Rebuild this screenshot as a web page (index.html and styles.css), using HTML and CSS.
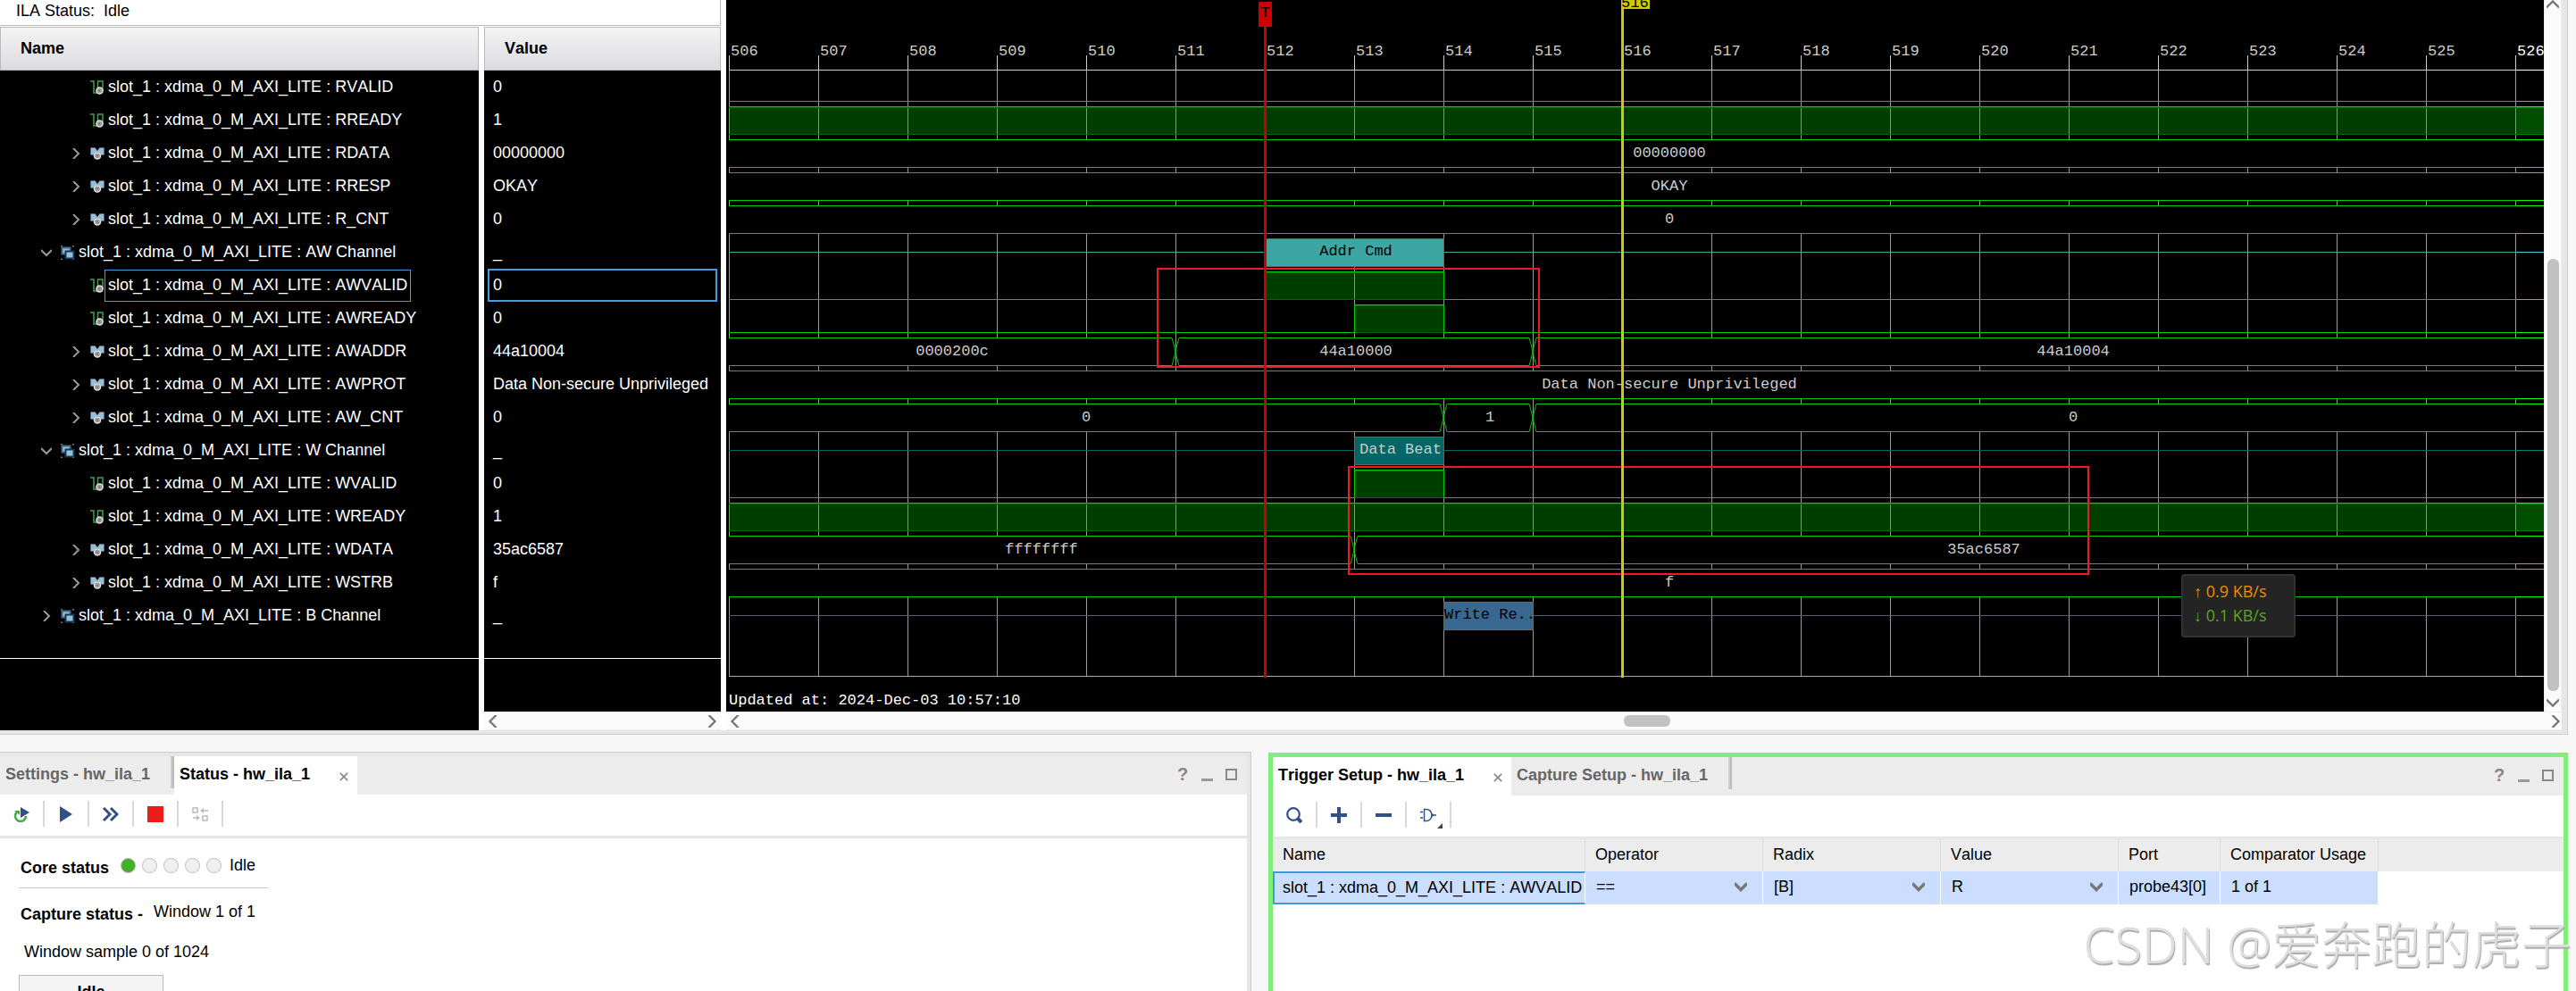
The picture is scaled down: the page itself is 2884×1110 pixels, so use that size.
FILE: index.html
```html
<!DOCTYPE html>
<html lang="en">
<head>
<meta charset="utf-8">
<title>hw_ila_1</title>
<link rel="stylesheet" href="styles.css">
</head>
<body>
<svg class="defs" aria-hidden="true">
  <symbol id="bit" viewBox="0 0 16 16"><path d="M0 1h4v13h4.500V1H14v11" fill="none" stroke="#3aa648" stroke-width="1.5"/><circle cx="10.500" cy="11.500" r="4.300" fill="#ddd"/><circle cx="10.500" cy="11.500" r="1.800" fill="#666" stroke="#999"/></symbol>
  <symbol id="bus" viewBox="0 0 16 16"><path d="M.5 1.500h5L8 5l2.500-3.500h5v8H12L8 6 4 9.500H.5z" fill="#93bfd8" stroke="#667" stroke-width=".6"/><circle cx="8" cy="10.500" r="4.300" fill="#ddd"/><circle cx="8" cy="10.500" r="1.800" fill="#666" stroke="#999"/></symbol>
  <symbol id="group" viewBox="0 0 16 16"><path d="M0 .5h2M13 .5h2M0 15.500h2M13 15.500h2" stroke="#777"/><path d="M1.500 2.500h9v7h-9z" fill="#93c2dc" stroke="#456d8c"/><path d="M5.500 6.500h9v8h-9z" fill="#93c2dc" stroke="#1c3550"/></symbol>
  <symbol id="right" viewBox="0 0 12 12"><path d="M3 0l6 6-6 6" fill="none" stroke="currentColor"/></symbol>
  <symbol id="left" viewBox="0 0 12 12"><path d="M9 0L3 6l6 6" fill="none" stroke="currentColor"/></symbol>
  <symbol id="down" viewBox="0 0 12 12"><path d="M0 3l6 6 6-6" fill="none" stroke="currentColor"/></symbol>
  <symbol id="up" viewBox="0 0 12 12"><path d="M0 9l6-6 6 6" fill="none" stroke="currentColor"/></symbol>
  <symbol id="cross" viewBox="0 0 12 12"><path d="M1 1l10 10M11 1L1 11" stroke="currentColor"/></symbol>
  <symbol id="swap" viewBox="0 0 8 32"><path d="M0 .5C2 6 6 26 8 31.500M8 .5C6 6 2 26 0 31.500" fill="none" stroke="#00cc00"/></symbol>
</svg>

<main class="viewer">
  <section class="signals">
    <div class="ila-status">ILA Status:&nbsp; Idle</div>
    <div class="columns">
      <div class="names">
        <h2 class="col-head">Name</h2>
        <ul class="list">
          <li class="leaf"><svg><use href="#bit"/></svg><span>slot_1 : xdma_0_M_AXI_LITE : RVALID</span></li>
          <li class="leaf"><svg><use href="#bit"/></svg><span>slot_1 : xdma_0_M_AXI_LITE : RREADY</span></li>
          <li class="leaf"><svg class="tw"><use href="#right"/></svg><svg><use href="#bus"/></svg><span>slot_1 : xdma_0_M_AXI_LITE : RDATA</span></li>
          <li class="leaf"><svg class="tw"><use href="#right"/></svg><svg><use href="#bus"/></svg><span>slot_1 : xdma_0_M_AXI_LITE : RRESP</span></li>
          <li class="leaf"><svg class="tw"><use href="#right"/></svg><svg><use href="#bus"/></svg><span>slot_1 : xdma_0_M_AXI_LITE : R_CNT</span></li>
          <li class="group"><svg class="tw"><use href="#down"/></svg><svg><use href="#group"/></svg><span>slot_1 : xdma_0_M_AXI_LITE : AW Channel</span></li>
          <li class="leaf"><svg><use href="#bit"/></svg><span class="picked">slot_1 : xdma_0_M_AXI_LITE : AWVALID</span></li>
          <li class="leaf"><svg><use href="#bit"/></svg><span>slot_1 : xdma_0_M_AXI_LITE : AWREADY</span></li>
          <li class="leaf"><svg class="tw"><use href="#right"/></svg><svg><use href="#bus"/></svg><span>slot_1 : xdma_0_M_AXI_LITE : AWADDR</span></li>
          <li class="leaf"><svg class="tw"><use href="#right"/></svg><svg><use href="#bus"/></svg><span>slot_1 : xdma_0_M_AXI_LITE : AWPROT</span></li>
          <li class="leaf"><svg class="tw"><use href="#right"/></svg><svg><use href="#bus"/></svg><span>slot_1 : xdma_0_M_AXI_LITE : AW_CNT</span></li>
          <li class="group"><svg class="tw"><use href="#down"/></svg><svg><use href="#group"/></svg><span>slot_1 : xdma_0_M_AXI_LITE : W Channel</span></li>
          <li class="leaf"><svg><use href="#bit"/></svg><span>slot_1 : xdma_0_M_AXI_LITE : WVALID</span></li>
          <li class="leaf"><svg><use href="#bit"/></svg><span>slot_1 : xdma_0_M_AXI_LITE : WREADY</span></li>
          <li class="leaf"><svg class="tw"><use href="#right"/></svg><svg><use href="#bus"/></svg><span>slot_1 : xdma_0_M_AXI_LITE : WDATA</span></li>
          <li class="leaf"><svg class="tw"><use href="#right"/></svg><svg><use href="#bus"/></svg><span>slot_1 : xdma_0_M_AXI_LITE : WSTRB</span></li>
          <li class="group"><svg class="tw"><use href="#right"/></svg><svg><use href="#group"/></svg><span>slot_1 : xdma_0_M_AXI_LITE : B Channel</span></li>
        </ul>
      </div>
      <div class="values">
        <h2 class="col-head">Value</h2>
        <ul class="list">
          <li>0</li><li>1</li><li>00000000</li><li>OKAY</li><li>0</li><li>_</li>
          <li class="picked">0</li><li>0</li><li>44a10004</li><li>Data Non-secure Unprivileged</li><li>0</li><li>_</li>
          <li>0</li><li>1</li><li>35ac6587</li><li>f</li><li>_</li>
        </ul>
        <div class="hbar"><svg><use href="#left"/></svg><svg><use href="#right"/></svg></div>
      </div>
    </div>
  </section>

  <section class="wave">
    <div class="plot">
      <div class="ruler">
        <span>506</span><span>507</span><span>508</span><span>509</span><span>510</span><span>511</span><span>512</span><span>513</span><span>514</span><span>515</span><span>516</span><span>517</span><span>518</span><span>519</span><span>520</span><span>521</span><span>522</span><span>523</span><span>524</span><span>525</span><span>526</span>
      </div>
      <div class="rows">
        <div class="row"><i class="lo rest"></i></div>
        <div class="row"><i class="hi rest"></i></div>
        <div class="row"><b class="rest">00000000</b></div>
        <div class="row"><b class="rest">OKAY</b></div>
        <div class="row"><b class="rest">0</b></div>
        <div class="row addr"><i class="idle" style="width:600px"></i><em style="width:201px">Addr Cmd</em><i class="idle rest"></i></div>
        <div class="row"><i class="lo" style="width:600px"></i><i class="hi pulse" style="width:201px"></i><i class="lo rest"></i></div>
        <div class="row"><i class="lo" style="width:700px"></i><i class="hi pulse" style="width:101px"></i><i class="lo rest"></i></div>
        <div class="row"><b style="width:496px">0000200c</b><svg><use href="#swap"/></svg><b style="width:392px">44a10000</b><svg><use href="#swap"/></svg><b class="rest">44a10004</b></div>
        <div class="row"><b class="rest">Data Non-secure Unprivileged</b></div>
        <div class="row"><b style="width:796px">0</b><svg><use href="#swap"/></svg><b style="width:92px">1</b><svg><use href="#swap"/></svg><b class="rest">0</b></div>
        <div class="row data"><i class="idle" style="width:700px"></i><em style="width:101px">Data Beat</em><i class="idle rest"></i></div>
        <div class="row"><i class="lo" style="width:700px"></i><i class="hi pulse" style="width:101px"></i><i class="lo rest"></i></div>
        <div class="row"><i class="hi rest"></i></div>
        <div class="row"><b style="width:696px">ffffffff</b><svg><use href="#swap"/></svg><b class="rest">35ac6587</b></div>
        <div class="row"><b class="rest">f</b></div>
        <div class="row resp"><i class="idle" style="width:800px"></i><em style="width:101px">Write Re..</em><i class="idle rest"></i></div>
      </div>
      <p class="updated">Updated at: 2024-Dec-03 10:57:10</p>
      <div class="beyond"></div>
      <div class="mark box-addr"></div>
      <div class="mark box-data"></div>
      <div class="trigger"><span>T</span></div>
      <div class="cursor"><span>516</span></div>
      <div class="netspeed"><div class="sent">↑ 0.9 KB/s</div><div class="received">↓ 0.1 KB/s</div></div>
    </div>
    <div class="vbar"><svg><use href="#up"/></svg><div class="thumb"></div><svg><use href="#down"/></svg></div>
    <div class="hbar"><svg><use href="#left"/></svg><div class="thumb"></div><svg><use href="#right"/></svg></div>
  </section>
</main>

<div class="docks">
  <section class="dock">
    <header class="tabs">
      <button class="tab">Settings - hw_ila_1</button><i class="tab-end"></i>
      <button class="tab active">Status - hw_ila_1<svg><use href="#cross"/></svg></button>
      <div class="win"><button>?</button><button aria-label="Minimise"><i class="min"></i></button><button aria-label="Maximise"><i class="max"></i></button></div>
    </header>
    <div class="tools">
      <button aria-label="Run trigger repeatedly"><svg viewBox="0 0 18 18"><path d="M4 6.500A6 6 0 1 0 14 11" fill="none" stroke="#3fae49" stroke-width="2.500"/><path d="M1 5h6v5z" fill="#3fae49"/><path d="M8 1l10 6-10 6z" fill="#324f86"/></svg></button>
      <button aria-label="Run trigger"><svg viewBox="0 0 18 18"><path d="M2 0l14 9-14 9z" fill="#324f86"/></svg></button>
      <button aria-label="Run immediate"><svg viewBox="0 0 18 18"><path d="M1 2l7 7-7 7M9 2l7 7-7 7" fill="none" stroke="#324f86" stroke-width="3"/></svg></button>
      <button aria-label="Stop"><svg viewBox="0 0 18 18"><path d="M0 0h18v18H0z" fill="#eb1c1c"/></svg></button>
      <button aria-label="Toggle auto re-trigger"><svg viewBox="0 0 18 18"><path d="M1 2h5v5H1zM12 11h5v5h-5zM18 5h-6M1 13h6" fill="none" stroke="#bbb" stroke-width="1.500"/><path d="M13 2v6l-4-3zM5 10v6l4-3z" fill="#bbb"/></svg></button>
    </div>
    <div class="status">
      <div class="core"><strong>Core status</strong><i class="dot on"></i><i class="dot"></i><i class="dot"></i><i class="dot"></i><i class="dot"></i><span>Idle</span></div>
      <div class="capture"><strong>Capture status -</strong><span>Window 1 of 1</span></div>
      <p class="sample">Window sample 0 of 1024</p>
      <div class="state">Idle</div>
    </div>
  </section>

  <section class="dock focus">
    <header class="tabs">
      <button class="tab active">Trigger Setup - hw_ila_1<svg><use href="#cross"/></svg></button>
      <button class="tab">Capture Setup - hw_ila_1</button><i class="tab-end"></i>
      <div class="win"><button>?</button><button aria-label="Minimise"><i class="min"></i></button><button aria-label="Maximise"><i class="max"></i></button></div>
    </header>
    <div class="tools">
      <button aria-label="Search"><svg viewBox="0 0 18 18"><circle cx="8" cy="8" r="6.800" fill="none" stroke="#324f86" stroke-width="2.200"/><path d="M13 13l4 4" stroke="#324f86" stroke-width="4"/></svg></button>
      <button aria-label="Add probe"><svg viewBox="0 0 18 18"><path d="M9 0v18M0 9h18" stroke="#324f86" stroke-width="4"/></svg></button>
      <button aria-label="Remove probe"><svg viewBox="0 0 18 18"><path d="M0 9h18" stroke="#324f86" stroke-width="4"/></svg></button>
      <button class="more" aria-label="Trigger condition"><svg viewBox="0 0 18 18"><path d="M4.500 2.500h2q6 0 6.500 6.500-.5 6.500-6.500 6.500h-2zM13 9h5M0 5.500h3M0 12h3M12 7l3 2-3 2" fill="none" stroke="#324f86" stroke-width="1.500"/></svg></button>
    </div>
    <table class="probes">
      <colgroup><col class="c-name"><col class="c-pick"><col class="c-pick"><col class="c-pick"><col class="c-port"><col class="c-use"><col></colgroup>
      <thead><tr><th>Name</th><th>Operator</th><th>Radix</th><th>Value</th><th>Port</th><th>Comparator Usage</th><th></th></tr></thead>
      <tbody><tr>
        <td class="current">slot_1 : xdma_0_M_AXI_LITE : AWVALID</td>
        <td><div class="pick"><select aria-label="Operator"><option>==</option></select><svg><use href="#down"/></svg></div></td>
        <td><div class="pick"><select aria-label="Radix"><option>[B]</option></select><svg><use href="#down"/></svg></div></td>
        <td><div class="pick"><select aria-label="Value"><option>R</option></select><svg><use href="#down"/></svg></div></td>
        <td>probe43[0]</td><td>1 of 1</td><td class="blank"></td>
      </tr></tbody>
    </table>
  </section>
</div>
<div class="watermark">CSDN @爱奔跑的虎子</div>
</body>
</html>
```
FILE: styles.css
```css
* { box-sizing: border-box; }
html, body { height: 100%; }
body {
  margin: 0;
  display: flex;
  flex-direction: column;
  overflow: hidden;
  position: relative;
  background: #f7f7f7;
  color: #000;
  font: 18px/22px "Liberation Sans", Arial, sans-serif;
  font-kerning: none;
}
ul, p, h2 { margin: 0; padding: 0; list-style: none; font-size: inherit; }
button { margin: 0; padding: 0; border: 0; background: none; font: inherit; color: inherit; }
svg { flex: none; display: block; stroke-width: 2; }
.defs { position: absolute; width: 0; height: 0; }

/* waveform viewer */
.viewer {
  flex: none;
  display: flex;
  margin-right: 9px;
  background: #fff;
  border-right: 1px solid #ccc;
  border-bottom: 1px solid #ccc;
  box-shadow: inset -6px -4px #e6e6e6;
  padding: 0 6px 4px 0;
}
.signals { flex: none; width: 813px; padding-right: 6px; display: flex; flex-direction: column; }
.ila-status { height: 29px; padding: 1px 18px; border: 1px solid #bbb; border-top: 0; border-left: 0; }
.columns { flex: 1; display: flex; gap: 6px; padding-top: 1px; }
.names, .values { display: flex; flex-direction: column; background: #000; color: #fff; }
.names { width: 536px; }
.values { flex: 1; }
.col-head {
  height: 49px;
  padding: 0 22px;
  line-height: 46px;
  color: #000;
  background: linear-gradient(#f3f3f3, #dcdce0);
  border: 1px solid #bbb;
}
.list { height: 659px; border-bottom: 1px solid #fff; }
.list li { height: 37px; display: flex; align-items: center; }
.list svg { width: 16px; height: 16px; }
.list .tw { width: 12px; height: 12px; margin-right: 10px; color: #999; }
.names span { padding: 0 3px 2px; border: 1px solid transparent; line-height: 32px; white-space: nowrap; }
.names .picked, .values .picked { border-color: #429ce0; }
.leaf { padding-left: 101px; }
.leaf:has(.tw) { padding-left: 79px; }
.group { padding-left: 46px; }
.values li { margin: 0 4px; padding: 0 4px 2px; border: 2px solid transparent; white-space: nowrap; }
.values .hbar { margin-top: auto; }

.hbar {
  height: 21px;
  display: flex;
  align-items: center;
  justify-content: space-between;
  background: #fbfbfb;
  border: 1px solid #eee;
  border-width: 1px 0;
  color: #777;
  padding: 0 3px;
}
.hbar svg, .vbar svg { width: 14px; height: 14px; }
.thumb { background: #c1c1c1; border-radius: 6px; }

.wave {
  flex: 1;
  min-width: 0;
  display: grid;
  grid-template-columns: minmax(0, 1fr) 20px;
  grid-template-rows: auto 21px;
}
.plot {
  position: relative;
  overflow: hidden;
  height: 797px;
  padding-left: 3px;
  background: #000;
  color: #ccc;
  font: 17px/22px "Liberation Mono", monospace;
}
.ruler { display: flex; height: 79px; overflow: hidden; border-bottom: 1px solid #ccc; }
.ruler span {
  flex: none;
  width: 100px;
  padding: 47px 0 0 2px;
  background: linear-gradient(#ccc, #ccc) 0 100% / 1px 16px no-repeat;
}
.rows {
  height: 679px;
  border-bottom: 1px solid #aaa;
  background: repeating-linear-gradient(to right, #999 0 1px, transparent 1px 100px);
  overflow: hidden;
}
/* the last value of each row runs on past the visible edge */
.row { display: flex; height: 37px; padding: 3px 0 2px; margin-right: -70px; }
.row > * { flex: none; }
.row > .rest { flex: 1; }
.row b { background: #000; border: 1px solid #0c0; border-width: 1px 0; font-weight: 400; text-align: center; line-height: 29px; padding-left: 4px; white-space: nowrap; }
.row svg { width: 8px; height: 32px; stroke-width: 1; }
.row .lo { border-bottom: 1px solid #0c0; }
.row .hi { background: rgba(0, 204, 0, .3); border-top: 1px solid #0c0; border-bottom: 1px solid #006400; box-shadow: inset 0 1px #006e00; }
.row .pulse { border-left: 1px solid #0c0; border-right: 1px solid #0c0; }
.row em { background: var(--tone); border: 1px solid #666; font-style: normal; text-align: center; line-height: 28px; padding-left: 3px; white-space: nowrap; color: #000; }
.row .idle { background: linear-gradient(var(--tone), var(--tone)) 0 15px / 100% 1px no-repeat; }
.addr { --tone: #3ca6a2; }
.data { --tone: #006666; }
.data em { color: #ccc; }
.resp { --tone: #386890; }
.row.resp em { padding: 0; text-align: left; }
.updated { padding-top: 16px; color: #fff; }
.beyond { position: absolute; left: 2004px; right: 0; top: 0; bottom: 0; backdrop-filter: brightness(1.25); }
.mark { position: absolute; border: 2px solid #ed1c24; }
.box-addr { left: 482px; top: 300px; width: 429px; height: 112px; }
.box-data { left: 696px; top: 522px; width: 830px; height: 122px; }
.trigger, .cursor { position: absolute; top: 0; width: 3px; height: 759px; }
.trigger { left: 602px; top: 2px; height: 757px; background: #c00; }
.cursor { left: 1002px; background: #cc0; }
.trigger span, .cursor span { position: absolute; color: #000; }
.trigger span { left: -6px; top: 0; width: 15px; height: 28px; line-height: 26px; text-align: center; background: #c00; }
.cursor span { left: 0; top: 0; width: 32px; height: 10px; line-height: 7px; overflow: hidden; background: #cc0; }
.netspeed {
  position: absolute;
  left: 1629px;
  top: 643px;
  width: 128px;
  height: 71px;
  padding: 4px 12px;
  background: #242424;
  border: 2px solid #333;
  border-radius: 4px;
  font: 18px/27px "Open Sans", "Noto Sans", sans-serif;
  white-space: nowrap;
}
.sent { color: #f08c00; }
.received { color: #5aa51e; }

.vbar {
  display: flex;
  flex-direction: column;
  align-items: center;
  justify-content: space-between;
  background: #fbfbfb;
  border: 1px solid #eee;
  border-width: 0 1px;
  color: #777;
  padding-bottom: 3px;
}
.vbar svg { margin-top: -2px; }
.vbar .thumb { width: 13px; height: 484px; margin-top: 270px; }
.wave > .hbar { grid-column: 1 / 3; padding-right: 0; }
.wave > .hbar .thumb { width: 52px; height: 13px; margin-left: 4px; }

/* docked panels */
.docks {
  flex: 1;
  min-height: 0;
  display: grid;
  grid-template-columns: 1400fr 1455fr;
  gap: 20px;
  padding: 20px 9px 0 0;
}
.dock {
  min-width: 0;
  overflow: hidden;
  background: #fff;
  border: solid #e6e6e6;
  border-width: 4px 4px 0 0;
  box-shadow: 0 0 0 1px #ccc;
}
.focus { border: solid #80ee7a; border-width: 5px 5px 0; box-shadow: none; }
.tabs { display: flex; height: 43px; background: #ececec; font-weight: 700; }
.tab { padding: 0 0 4px 6px; color: #666; display: flex; align-items: center; white-space: nowrap; }
.tab.active { width: 205px; background: #fff; color: #000; justify-content: space-between; padding-right: 10px; }
.tab svg { width: 10px; height: 10px; color: #888; margin-top: 6px; }
.focus .tab.active { width: 267px; }
.tab-end { width: 4px; height: 36px; margin-left: 23px; background: #ccc; border-right: 2px solid #bbb; }
.win { margin-left: auto; display: flex; padding: 9px 11px 0 0; gap: 13px; color: #888; }
.win button { width: 14px; height: 22px; display: flex; align-items: center; justify-content: center; font-size: 20px; font-weight: 700; }
.min { width: 13px; height: 3px; margin-top: 12px; background: #999; }
.max { width: 13px; height: 13px; border: 2px solid #888; }
.tools { display: flex; height: 49px; padding: 7px 0 10px; border-bottom: 3px solid #e6e6e6; }
.tools button { width: 50px; padding-left: 15px; border-right: 2px solid #d8d8d8; position: relative; display: flex; align-items: center; }
.tools svg { width: 18px; height: 18px; }
.more::after { content: ""; position: absolute; right: 8px; bottom: -1px; border: 3px solid #444; border-left-color: transparent; border-top-color: transparent; }

.status { padding: 21px 21px 0; display: flex; flex-direction: column; align-items: flex-start; }
.core { display: flex; align-items: center; gap: 7px; width: 279px; height: 35px; padding-left: 2px; border-bottom: 1px solid #ccc; padding-bottom: 16px; white-space: nowrap; }
.core strong { margin-right: 6px; padding-top: 6px; }
.core span { padding-left: 2px; }
.dot { flex: none; width: 17px; height: 17px; border: 1px solid #bbb; border-radius: 50%; background: #f0f0f0; }
.dot.on { background: #43b02a; }
.capture { display: flex; gap: 12px; padding: 15px 0 0 2px; white-space: nowrap; }
.capture strong { padding-top: 3px; }
.sample { padding: 20px 0 0 6px; }
.state { width: 162px; height: 32px; margin-top: 15px; padding-top: 7px; border: 1px solid #bbb; background: #f4f4f4; font-weight: 700; text-align: center; }

.probes { width: 100%; table-layout: fixed; border-collapse: separate; border-spacing: 0; }
.c-name { width: 350px; }
.c-pick { width: 199px; }
.c-port { width: 114px; }
.c-use { width: 177px; }
.probes th, .probes td { height: 36px; padding: 0 0 2px 11px; text-align: left; font-weight: 400; white-space: nowrap; border-right: 1px solid #ddd; }
.probes th { background: #ececec; }
.probes td { height: 37px; padding-left: 12px; background: #cbdeff; border-right-color: #fff; border-bottom: 1px solid #ddd; }
.probes th:last-child, .probes td.blank { border: 0; }
.probes td.blank { background: none; }
.probes td.current { padding-left: 9px; border: 2px solid #429ad8; border-right: 1px solid #fff; }
.pick { display: flex; align-items: center; padding-right: 17px; }
.pick select { flex: 1; appearance: none; border: 0; padding: 0; background: none; font: inherit; color: inherit; }
.pick svg { width: 14px; height: 14px; color: #777; pointer-events: none; stroke-width: 3; }

.watermark {
  position: absolute;
  right: 5px;
  bottom: 13px;
  color: #dedede;
  text-shadow: 1px 2px 1px #aaa;
  font: 300 56px/80px "Noto Sans", "Noto Sans CJK SC", sans-serif;
  white-space: nowrap;
}
```
